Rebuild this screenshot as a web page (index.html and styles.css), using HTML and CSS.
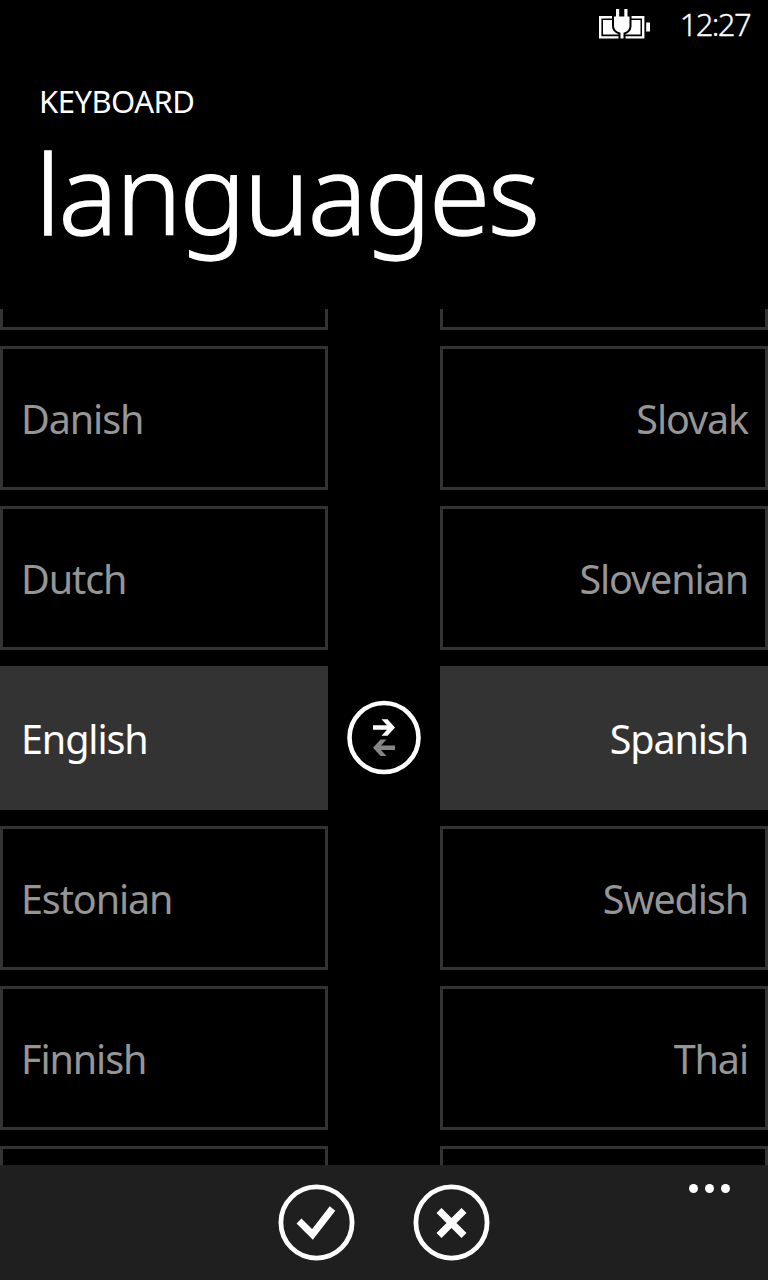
FILE: index.html
```html
<!DOCTYPE html>
<html lang="en">
<head>
    <meta charset="UTF-8">
    <meta name="viewport" content="width=device-width, initial-scale=1.0">
    <title>Keyboard languages</title>
    <link rel="stylesheet" href="styles.css">
</head>
<body>
    <div class="status-bar">
        <svg class="battery" width="52" height="32" viewBox="0 0 52 32">
            <path d="M1.200 9.200h43v20.200h-43z" fill="none" stroke="#fff" stroke-width="2.400"/>
            <rect x="4" y="12" width="37.500" height="14.500" fill="#fff"/>
            <rect x="47.200" y="14.500" width="3.800" height="9" fill="#fff"/>
            <path d="M14 7.500h17.500v10.500q0 5.500-6 7.500v6h-5v-6q-6.500-2-6.500-7.500z" fill="#fff" stroke="#000" stroke-width="2"/>
            <path d="M17 1h3.200v8h-3.200zM25.300 1h3.200v8h-3.200z" fill="#fff"/>
        </svg>
        <span class="clock">12:27</span>
    </div>

    <div class="header">
        <div class="app-name">KEYBOARD</div>
        <h1>languages</h1>
    </div>

    <div class="picker">
        <div class="column">
            <div class="tile"></div>
            <div class="tile">Danish</div>
            <div class="tile">Dutch</div>
            <div class="tile selected">English</div>
            <div class="tile">Estonian</div>
            <div class="tile">Finnish</div>
            <div class="tile"></div>
        </div>
        <button class="swap" aria-label="Swap">
            <svg width="76" height="76" viewBox="0 0 76 76">
                <circle cx="38" cy="38.500" r="34.500" fill="none" stroke="#fff" stroke-width="4.600"/>
                <path d="M27 26.300h14L35.500 20.300h6l7.500 8.200-7.500 8.200h-6l5.500-6H27z" fill="#fff"/>
                <path d="M49 46.500H35l5.500-6h-6L27 48.700l7.500 8.200h6L35 50.900h14z" fill="#858585"/>
            </svg>
        </button>
        <div class="column right">
            <div class="tile"></div>
            <div class="tile">Slovak</div>
            <div class="tile">Slovenian</div>
            <div class="tile selected">Spanish</div>
            <div class="tile">Swedish</div>
            <div class="tile">Thai</div>
            <div class="tile"></div>
        </div>
    </div>

    <div class="app-bar">
        <button aria-label="Done">
            <svg width="77" height="77" viewBox="0 0 77 77">
                <circle cx="38.500" cy="38.500" r="35.600" fill="none" stroke="#fff" stroke-width="4.800"/>
                <path d="M21 37L34.500 50.500L54.500 24.500" fill="none" stroke="#fff" stroke-width="7"/>
            </svg>
        </button>
        <button aria-label="Cancel">
            <svg width="77" height="77" viewBox="0 0 77 77">
                <circle cx="38.500" cy="38.500" r="35.600" fill="none" stroke="#fff" stroke-width="4.800"/>
                <path d="M26 26.500L51 51.500M51 26.500L26 51.500" fill="none" stroke="#fff" stroke-width="7"/>
            </svg>
        </button>
        <div class="more"><i></i><i></i><i></i></div>
    </div>
</body>
</html>
```

FILE: styles.css
```css
* {
    box-sizing: border-box;
}
body {
    margin: 0;
    width: 768px;
    height: 1280px;
    display: flex;
    flex-direction: column;
    overflow: hidden;
    background: #000;
    color: #fff;
    font-family: "Noto Sans", "Open Sans", sans-serif;
}
button {
    padding: 0;
    border: none;
    background: none;
}
svg {
    display: block;
}

.status-bar {
    height: 50px;
    padding: 8px 18px 0 0;
    display: flex;
    justify-content: flex-end;
    gap: 29px;
}
.clock {
    font-size: 31px;
    font-weight: 300;
    line-height: 33px;
    letter-spacing: -1.6px;
    -webkit-text-stroke: 0.3px #fff;
}

.header {
    height: 259px;
    padding: 35px 39px 0;
}
.app-name {
    font-size: 31px;
    line-height: 32px;
    letter-spacing: -0.5px;
}
h1 {
    margin: 19px 0 0 -4px;
    font-size: 111px;
    font-weight: 300;
    line-height: 112px;
    letter-spacing: -2.3px;
    -webkit-text-stroke: 1.3px #fff;
}

.picker {
    height: 856px;
    display: grid;
    grid-template-columns: 328px 1fr 328px;
    align-items: center;
    overflow: hidden;
}
.column {
    height: 856px;
    padding-top: 2px;
    display: flex;
    flex-direction: column;
    justify-content: center;
    gap: 16px;
}
.tile {
    flex: none;
    height: 144px;
    padding: 0 17px 0 18px;
    border: 3px solid #333;
    color: #969696;
    font-size: 39.5px;
    line-height: 141px;
    letter-spacing: -1.1px;
}
.right .tile {
    text-align: right;
}
.tile.selected {
    background: #333;
    color: #fff;
}
.swap {
    justify-self: center;
}

.app-bar {
    position: relative;
    height: 115px;
    padding-top: 19px;
    display: flex;
    justify-content: center;
    align-items: flex-start;
    gap: 58px;
    background: #1f1f1f;
}
.more {
    position: absolute;
    top: 19px;
    right: 38px;
    display: flex;
    gap: 7px;
}
.more i {
    width: 9px;
    height: 9px;
    border-radius: 50%;
    background: #fff;
}
```
